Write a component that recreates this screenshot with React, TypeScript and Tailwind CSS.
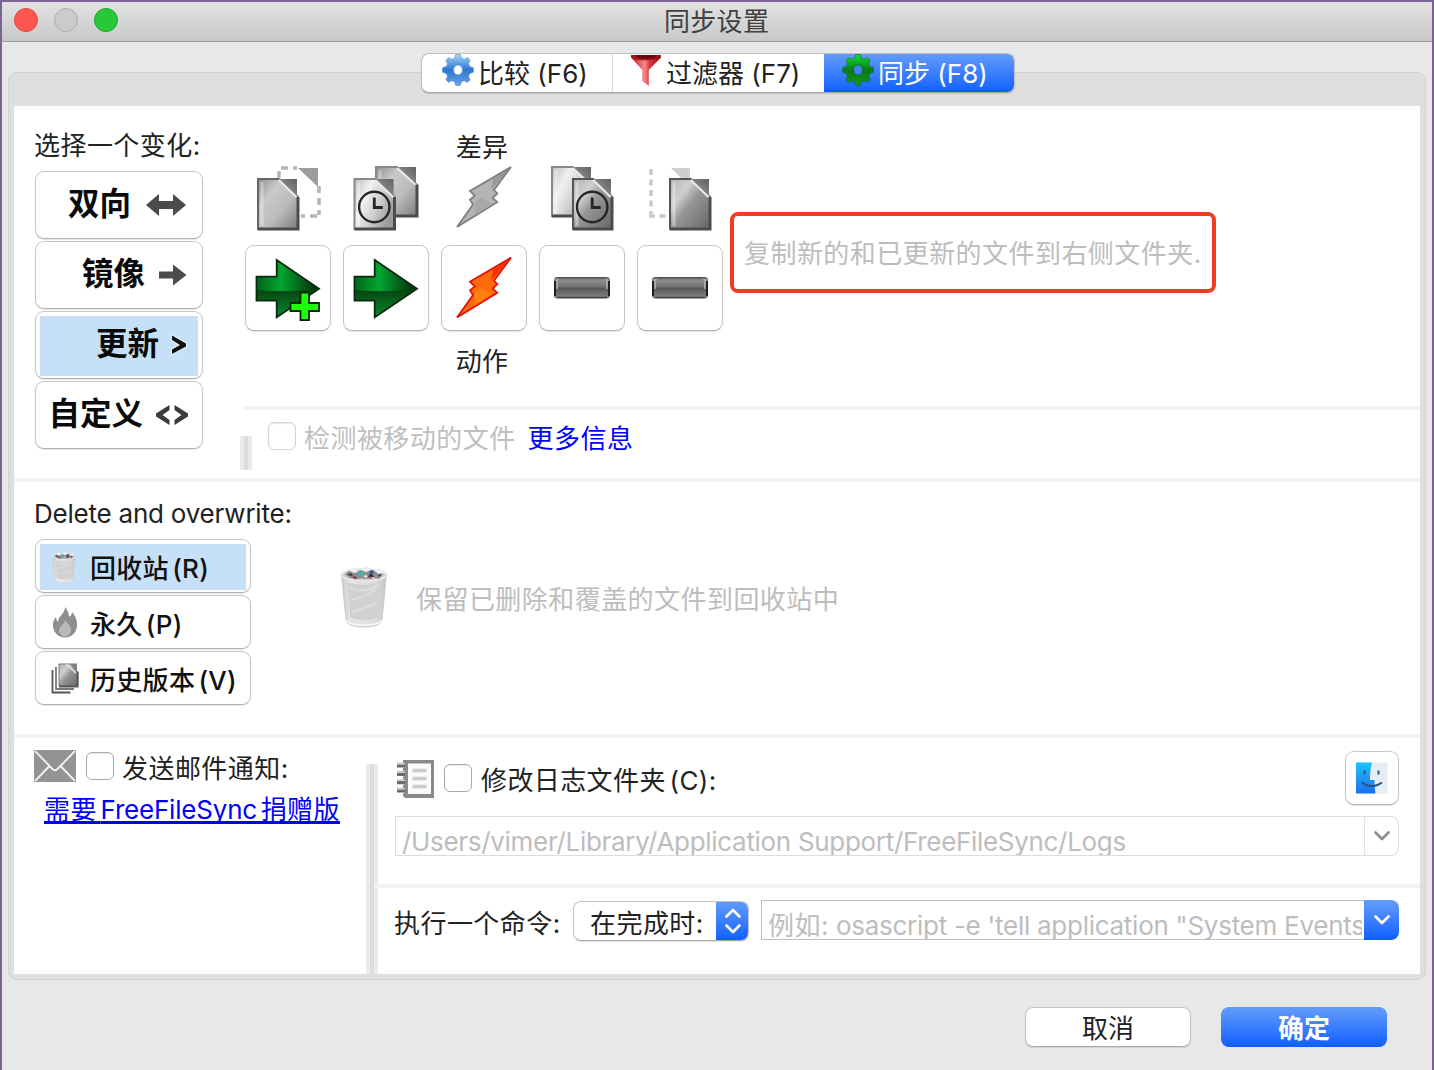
import React from "react";

const Label = ({ children, className = "tracking-[0.45px]" }: { children: React.ReactNode; className?: string }) => (
  <span className={`-mb-[2px] block whitespace-nowrap text-[26px] leading-[34px] ${className}`}>{children}</span>
);

const Gear = ({ id, top, mid, low, stroke, hole }: { id: string; top: string; mid: string; low: string; stroke: string; hole: string }) => (
  <svg width="32" height="32" viewBox="0 0 32 32" className="shrink-0">
    <defs>
      <linearGradient id={id} x1="0" y1="0" x2="0" y2="1">
        <stop offset="0" stopColor={top} />
        <stop offset="0.5" stopColor={mid} />
        <stop offset="1" stopColor={low} />
      </linearGradient>
    </defs>
    <g fill={`url(#${id})`} stroke={stroke} strokeWidth="0.6">
      <path d="M13.8 0.5h4.400l1.300 3.800 2.800 1 3.200-1.800 2.600 2.800-1.600 3.500 1.300 2.700 3.700 1.300v4.400l-3.700 1.300-1.300 2.700 1.600 3.500-2.600 2.800-3.200-1.800-2.800 1-1.300 3.800h-4.400l-1.300-3.800-2.800-1-3.200 1.800-2.600-2.800 1.600-3.500-1.300-2.700-3.700-1.300v-4.400l3.700-1.300 1.300-2.700-1.600-3.500 2.600-2.800 3.200 1.800 2.800-1z" />
    </g>
    <ellipse cx="16" cy="16" rx="4.6" ry="5" fill={hole} stroke={stroke} strokeOpacity="0.6" strokeWidth="1.6" />
  </svg>
);

const Funnel = () => (
  <svg width="32" height="32" viewBox="0 0 32 32" className="shrink-0">
    <defs>
      <linearGradient id="funnel" x1="0" x2="1">
        <stop offset="0" stopColor="#c4101a" />
        <stop offset="0.45" stopColor="#f58a8c" />
        <stop offset="0.62" stopColor="#d93a40" />
        <stop offset="1" stopColor="#a8060e" />
      </linearGradient>
    </defs>
    <path d="M1 3.5L12.3 16v11l6.5 5V16L31 3.5z" fill="url(#funnel)" />
    <path d="M1 1h30v2.5c-4 3.8-26 3.8-30 0z" fill="#a01419" />
    <path d="M6 1h20v2c-5 2-15 2-20 0z" fill="#6a0609" />
  </svg>
);

const paper = (x: number, y: number, w: number, h: number, fill: string, edge: string) => (
  <g>
    <path d={`M${x} ${y}h${w * 0.52}L${x + w} ${y + h * 0.36}V${y + h}H${x}z`} fill={fill} stroke={edge} strokeWidth="2" />
    <path d={`M${x + w * 0.52} ${y}H${x + w - 1}V${y + h * 0.36}z`} fill="url(#fold)" />
    <path d={`M${x + w * 0.52} ${y + 1}L${x + w - 1} ${y + h * 0.37}`} stroke="#ececec" strokeWidth="2" />
    <path d={`M${x + 4} ${y + 3}V${y + h - 3}`} stroke="#fff" strokeOpacity="0.35" strokeWidth="3" />
    <path d={`M${x + w} ${y + h * 0.36}V${y + h}H${x}`} fill="none" stroke="#4c4c4c" strokeWidth="3" />
  </g>
);

const Clock = ({ x }: { x: number }) => (
  <g fill="none" stroke="#262626">
    <circle cx={x} cy="41" r="15.2" strokeWidth="2.4" />
    <path d={`M${x} 31.5v10h8.5`} strokeWidth="2.8" />
  </g>
);

const Art = ({ children }: { children: React.ReactNode }) => (
  <svg width="66" height="66" viewBox="0 0 66 66" className="shrink-0">{children}</svg>
);

const SharedPaints = () => (
  <svg width="0" height="0" className="absolute">
    <defs>
      <linearGradient id="page" x1="0" y1="0" x2="1" y2="1">
        <stop offset="0" stopColor="#8d8d8d" />
        <stop offset="0.3" stopColor="#c9c9c9" />
        <stop offset="0.6" stopColor="#bcbcbc" />
        <stop offset="1" stopColor="#7b7b7b" />
      </linearGradient>
      <linearGradient id="pageLight" x1="0" y1="0" x2="1" y2="0.6">
        <stop offset="0" stopColor="#bdbdbd" />
        <stop offset="0.35" stopColor="#f1f1f1" />
        <stop offset="0.65" stopColor="#d0d0d0" />
        <stop offset="1" stopColor="#999" />
      </linearGradient>
      <linearGradient id="pageDark" x1="0" y1="0" x2="1" y2="1">
        <stop offset="0" stopColor="#b5b5b5" />
        <stop offset="0.3" stopColor="#cfcfcf" />
        <stop offset="0.5" stopColor="#969696" />
        <stop offset="1" stopColor="#666" />
      </linearGradient>
      <linearGradient id="fold" x1="0" y1="1" x2="1" y2="0">
        <stop offset="0" stopColor="#a5a5a5" />
        <stop offset="1" stopColor="#606060" />
      </linearGradient>
      <linearGradient id="greenTop" x1="0" y1="0" x2="1" y2="0">
        <stop offset="0" stopColor="#00661b" />
        <stop offset="0.4" stopColor="#03a52f" />
        <stop offset="1" stopColor="#04240b" />
      </linearGradient>
      <linearGradient id="greenLow" x1="0" y1="0" x2="0" y2="1">
        <stop offset="0" stopColor="#06400f" />
        <stop offset="1" stopColor="#0a8c2b" />
      </linearGradient>
      <linearGradient id="barFill" x1="0" y1="0" x2="0" y2="1">
        <stop offset="0" stopColor="#6a6a6a" />
        <stop offset="0.15" stopColor="#8c8c8c" />
        <stop offset="0.45" stopColor="#747474" />
        <stop offset="0.52" stopColor="#555" />
        <stop offset="1" stopColor="#888" />
      </linearGradient>
      <linearGradient id="can" x1="0" x2="1">
        <stop offset="0" stopColor="#c9c9c9" />
        <stop offset="0.2" stopColor="#e6e6e6" />
        <stop offset="0.75" stopColor="#dcdcdc" />
        <stop offset="1" stopColor="#c4c4c4" />
      </linearGradient>
    </defs>
  </svg>
);

const Bolt = ({ hot }: { hot?: boolean }) => (
  <Art>
    <g transform={hot ? "translate(0 1.6)" : undefined}>
      <path
        d="M6 61L22 38.5L19 33.8L23.7 29.8L19 25L60 1L43 24L46.3 27.5L41.7 32L46.3 36.2z"
        fill={hot ? "#ff6a0a" : "#b4b4b4"}
        stroke={hot ? "#e6140a" : "#808080"}
        strokeWidth="1.8"
      />
      <path d="M24 36L30 32L41 37L24 49z" fill={hot ? "#ff8a10" : "#a2a2a2"} fillOpacity="0.7" />
      <path d="M59 2L40 24L42 13z" fill={hot ? "#ef1a0a" : "#8c8c8c"} fillOpacity="0.7" />
    </g>
  </Art>
);

const arrowShape = "M1.500 21.7H21.7V5L64 33.7L21.7 62.3V45.7H1.500z";
const GreenArrow = ({ plus }: { plus?: boolean }) => (
  <Art>
    <path d={arrowShape} fill="url(#greenTop)" />
    <path d="M2 35Q30 38 63 33.7L21.7 62.3V45.7H2z" fill="url(#greenLow)" />
    <path d={arrowShape} fill="none" stroke="#0a2a10" strokeWidth="1.8" />
    {plus && <path d="M45.500 37.500h8.500v10.500h10v8h-10v9h-8.500v-9h-10v-8h10z" fill="#1dff0a" stroke="#052a05" strokeWidth="1.8" />}
  </Art>
);

const GrayBar = () => (
  <Art>
    <rect x="5" y="22" width="56" height="21.5" rx="3" fill="url(#barFill)" />
    <path d="M8 25q0-1 2-1M58 25q0-1-2-1M8 25v9M58 25v9" stroke="#b0b0b0" strokeWidth="1.6" fill="none" />
    <path d="M6 26v15M60 26v15" stroke="#1f1f1f" strokeWidth="2" />
    <path d="M8 42.500h50" stroke="#444" strokeWidth="1.600" />
    <path d="M8 22.800h50" stroke="#555" strokeWidth="1.600" />
  </Art>
);

const categories = [
  <Art key="a">
    <path d="M24 12V2H42M64 20v29M62 50H46" fill="none" stroke="#b5b5b5" strokeWidth="3.5" strokeDasharray="7 5" />
    <path d="M43 2H63V21z" fill="#9c9c9c" />
    {paper(3, 13, 40, 50, "url(#page)", "#666")}
  </Art>,
  <Art key="b">
    {paper(23, 1, 41, 49, "url(#page)", "#888")}
    {paper(1.5, 13, 40, 50, "url(#pageLight)", "#888")}
    <Clock x={21.3} />
  </Art>,
  <Bolt key="c" />,
  <Art key="d">
    {paper(3, 1, 40, 49, "url(#pageLight)", "#888")}
    {paper(24, 13, 39, 50, "url(#pageDark)", "#555")}
    <Clock x={43.2} />
  </Art>,
  <Art key="e">
    <path d="M4 3V48M2 50H21" fill="none" stroke="#c9c9c9" strokeWidth="3.5" strokeDasharray="6 4.5" />
    <path d="M24 2H43V12H34z" fill="#cfcfcf" />
    {paper(23, 13, 40, 50, "url(#pageDark)", "#555")}
  </Art>,
];

const actions = [<GreenArrow key="a" plus />, <GreenArrow key="b" />, <Bolt key="c" hot />, <GrayBar key="d" />, <GrayBar key="e" />];

const TrashCan = ({ w, h }: { w: number; h: number }) => (
  <svg width={w} height={h} viewBox="0 0 48 62" className="shrink-0">
    <path d="M1.500 8L6 54q1 7 18 7t18-7L46.500 8z" fill="url(#can)" stroke="#cdcdcd" strokeWidth="1" />
    <path d="M7 16L10.500 52q13 4 27 0L41 16q-15 6-34 0z" fill="#d2d1d1" />
    <path d="M9 21q14 8 30-3M11 34q12-2 26-12M12 46q12-3 24-9" stroke="#dedcdc" strokeWidth="2" fill="none" />
    <path d="M6 54q3 5 18 5t18-5" stroke="#f3f3f3" strokeWidth="2" fill="none" />
    <ellipse cx="24" cy="9" rx="22" ry="6" fill="#c9c9c9" stroke="#e6e6e6" strokeWidth="2" />
    <path d="M5 8l5-4 6 3 4-3 6 2 7-2 4 3 6 1-4 5-7-2-5 2-5-1-5 1-7-1z" fill="#8d8c8e" />
    <path d="M7 9l4-2 2 3zM28 11l3-5 3 5zM38 9l3-1-1 3zM13 12l2-2 2 3z" fill="#3a3337" />
    <path d="M17 8l4-3 3 3-4 2z" fill="#37b7b0" />
    <path d="M29 5l4-1 1 3-3 1z" fill="#3b569c" />
    <path d="M8 4l6-3 4 4-4 2zM21 3l6-3 3 4-4 2zM35 5l5-3 3 4-4 2zM23 10l4-1v3z" fill="#efefef" />
    <path d="M11 11l3-1 1 3zM28 12l3-2 1 3z" fill="#a8503c" />
  </svg>
);

const Flame = () => (
  <svg width="26" height="32" viewBox="0 0 26 32" className="shrink-0">
    <path d="M13 1c3 4 4 7 4 10 2-1 3-3 3-5 4 5 5.500 9 5 14-.5 7-6 11.500-12 11.500S1.500 27 1 20c-.2-4 1-7 3-9 0 2 1 4 2 5 0-6 7-8 7-15z" fill="#8f8f8f" />
    <path d="M13 14c3 4 6 6 6 10 0 4-3 6.500-6 6.500S7 28 7 24c0-3 5-5 6-10z" fill="#b9b9b9" />
  </svg>
);

const Versions = () => (
  <svg width="28" height="31" viewBox="0 0 28 31" className="shrink-0">
    <path d="M1.500 7v22.500h18" fill="none" stroke="#555" strokeWidth="1.800" />
    <path d="M5 4v22h18" fill="none" stroke="#777" strokeWidth="1.800" />
    <path d="M8 1h12l7 8v14H8z" fill="url(#pageDark)" stroke="#777" strokeWidth="1" />
    <path d="M19 .500h7V9z" fill="#808080" />
    <path d="M15 1l10 9" stroke="#e5e5e5" strokeWidth="1.500" />
    <path d="M26.500 9v14.500H8" fill="none" stroke="#555" strokeWidth="1.800" />
  </svg>
);

const Envelope = () => (
  <svg width="42" height="32" viewBox="0 0 42 32" className="shrink-0">
    <rect width="42" height="32" fill="#939393" />
    <path d="M1 1l17.500 18q2.500 2.500 5 0L41 1M1 31l14.500-15M41 31L26.500 16" fill="none" stroke="#f0f0f0" strokeWidth="1.900" />
  </svg>
);

const Notebook = () => (
  <svg width="38" height="38" viewBox="0 0 38 38" className="shrink-0">
    <path d="M7 0h31v38H7z" fill="#8a8a8a" />
    <path d="M12 3.500h23v30.500H12z" fill="#fafafa" />
    <path d="M5 3v35" stroke="#fff" strokeWidth="7" strokeDasharray="5 3.400" />
    <path d="M1 6h8M1 14.300h8M1 22.600h8M1 31h8" stroke="#6b6b6b" strokeWidth="3.200" />
    <path d="M1 3.500h8M1 11.800h8M1 20h8M1 28.400h8" stroke="#c4c4c4" strokeWidth="1.500" />
    <path d="M16.500 10.500h14M16.500 18.500h14M16.500 26.500h14" stroke="#cbcbcb" strokeWidth="3.600" />
  </svg>
);

const Finder = () => (
  <svg width="34" height="34" viewBox="0 0 34 34" className="shrink-0">
    <defs>
      <linearGradient id="face" x1="0" y1="0" x2="0" y2="1">
        <stop offset="0" stopColor="#1bc4fb" />
        <stop offset="1" stopColor="#1f6df0" />
      </linearGradient>
    </defs>
    <rect x="1.500" y="1.500" width="31" height="31" fill="#e6edf6" />
    <path d="M1 1.500h16c-1.500 6-2 11-2 17.500h4.500c0 5 .3 9 1 13.500H1z" fill="url(#face)" />
    <path d="M9.500 9.500v4M23.500 9.500v4" stroke="#2b567f" strokeWidth="2" />
    <path d="M7 21.500q9.500 7.500 20 0" fill="none" stroke="#2b567f" strokeWidth="1.900" />
  </svg>
);

const Check = ({ dim }: { dim?: boolean }) => (
  <span className={`block size-7 shrink-0 rounded-[6px] border bg-white shadow-[inset_0_1px_1px_rgba(0,0,0,0.08)] ${dim ? "border-[#d4d4d4]" : "border-[#a9a9a9]"}`} />
);

const card = "rounded-[9px] border border-[#c6c6c6] border-b-[#b2b2b2] bg-white shadow-[0_1px_1px_rgba(0,0,0,0.1)]";
const blue = "bg-linear-to-b from-[#639cfb] to-[#0a5dff]";

const modes = [
  { name: "双向", gap: "gap-[14px] pr-[11px]", icon: <svg width="42" height="24" viewBox="0 0 42 24"><path d="M1 12L14 1v7h14V1l13 11-13 11v-7H14v7z" fill="#4b4b4b" /></svg> },
  { name: "镜像", gap: "gap-[13px] pr-[11px]", icon: <svg width="29" height="24" viewBox="0 0 29 24"><path d="M1 8.500h14V1.500L28.500 12 15 22.500v-7H1z" fill="#4b4b4b" /></svg> },
  { name: "更新", gap: "gap-[11px] pr-[10px]", icon: <svg width="18" height="26" viewBox="0 0 18 26"><path d="M2 3.500L16 11.500v3L2 22v-4.500l8-4.600L2 8z" fill="#fff" stroke="#fff" strokeOpacity="0.500" strokeWidth="2.500" /><path d="M2 3.500L16 11.500v3L2 22v-4.500l8-4.600L2 8z" fill="#111" /></svg> },
  { name: "自定义", gap: "gap-[12px] pr-[9px]", icon: <svg width="34" height="24" viewBox="0 0 34 24"><path d="M14.500 2L1 10.500v3L14.500 22v-5l-7-5 7-5zM19.500 2L33 10.500v3L19.500 22v-5l7-5-7-5z" fill="#3c3c3c" /></svg> },
];

const Chevron = ({ color }: { color: string }) => (
  <svg width="16" height="10" viewBox="0 0 16 10"><path d="M1.500 1.500L8 8l6.500-6.500" fill="none" stroke={color} strokeWidth="2.600" strokeLinecap="round" strokeLinejoin="round" /></svg>
);

export default function App() {
  return (
    <div className="flex h-[1070px] w-[1434px] flex-col overflow-hidden border-x-2 border-t-2 border-[#7b6397] bg-[#e8e8e8] font-['Inter','Noto_Sans_CJK_SC',sans-serif] text-[#222]">
      <SharedPaints />
      <header className="flex h-10 shrink-0 items-start border-b border-[#9e9e9e] bg-linear-to-b from-[#e2e2e2] to-[#c9c9c9] pl-3 pt-[6px]">
        <div className="flex w-[650px] gap-4">
          <span className="size-6 rounded-full border border-[#e2463f] bg-[#ff574f]" />
          <span className="size-6 rounded-full border border-[#adadad] bg-[#cbcbcb]" />
          <span className="size-6 rounded-full border border-[#12ac28] bg-[#27c83a]" />
        </div>
        <Label className="-mt-[3px] tracking-[0.3px] text-[#404040]">同步设置</Label>
      </header>

      <main className="mx-[6px] mt-[30px] h-[908px] shrink-0 rounded-[9px] border border-[#d2d2d2] bg-[#dfdfdf] px-[5px]">
        <nav className="-mt-5 flex h-[53px] justify-center pl-[2px]">
          <div className="flex h-10 w-[594px] overflow-hidden rounded-[8px] border border-[#c0c0c0] border-b-[#a6a6a6] bg-white shadow-[0_1px_1px_rgba(0,0,0,0.12)]">
            <div className="flex w-[191px] border-r border-[#dadada] pl-5">
              <Gear id="gearBlue" top="#a9d4fb" mid="#2d76cf" low="#6aa5e8" stroke="#4a8de0" hole="#fff" />
              <Label className="ml-1 mt-[3px]">比较 (F6)</Label>
            </div>
            <div className="flex w-[211px] pl-[17px]">
              <Funnel />
              <Label className="ml-1 mt-[3px]">过滤器 (F7)</Label>
            </div>
            <div className={`-my-px -mr-px flex flex-1 pl-[18px] pt-px text-white ${blue}`}>
              <Gear id="gearGreen" top="#15e02c" mid="#087c1a" low="#12961f" stroke="#0a6a20" hole="#3f83f7" />
              <Label className="ml-1 mt-[3px]">同步 (F8)</Label>
            </div>
          </div>
        </nav>

        <div className="flex h-[868px] flex-col bg-white">
          <section className="flex h-[372px]">
            <div className="w-[226px] pl-[21px] pt-[23px]">
              <Label className="-ml-px tracking-[0.45px]">选择一个变化:</Label>
              <div className="mt-[10px] flex flex-col gap-[2px]">
                {modes.map((m) => (
                  <div key={m.name} className={`h-[68px] w-[168px] p-1 ${card}`}>
                    <div className={`flex h-[60px] items-center justify-end ${m.gap} ${m.name === "更新" ? "bg-[#c6e0f7]" : ""}`}>
                      <span className="-mt-[5px] whitespace-nowrap text-[31.5px] font-bold leading-[40px] text-[#0a0a0a]">{m.name}</span>
                      <span className="-mt-[2px]">{m.icon}</span>
                    </div>
                  </div>
                ))}
              </div>
            </div>

            <div className="flex flex-1 flex-col">
              <div className="ml-1 flex h-[300px]">
                <div className="ml-px flex w-[478px] flex-col items-start">
                  <Label className="mt-[25px] w-[474px] text-center tracking-[0.3px]">差异</Label>
                  <div className="mt-[3px] flex gap-8 pl-[10px]">{categories}</div>
                  <div className="mt-[13px] flex gap-3">
                    {actions.map((a, i) => (
                      <div key={i} className={`flex size-[86px] items-center justify-center ${card}`}>{a}</div>
                    ))}
                  </div>
                  <Label className="mt-[14px] w-[474px] text-center tracking-[0.3px]">动作</Label>
                </div>
                <div className="ml-[7px] mt-[106px] flex h-[81px] w-[486px] items-center rounded-[8px] border-4 border-[#ef3e23] pl-[10px] text-[#bdbdbd]">
                  <Label>复制新的和已更新的文件到右侧文件夹.</Label>
                </div>
              </div>
              <div className="ml-1 h-1 bg-[#f4f4f4]" />
              <div className="flex h-[68px]">
                <div className="mt-[26px] h-[34px] w-3 bg-[#ebebeb] px-1">
                  <div className="h-full rounded-full border border-[#d8d8d8] bg-[#dfdfdf]" />
                </div>
                <div className="ml-4 mt-3"><Check dim /></div>
                <Label className="ml-2 mt-3 tracking-[0.45px] text-[#bfbfbf]">检测被移动的文件</Label>
                <Label className="ml-3 mt-3 tracking-[0.45px] text-[#0000ff]">更多信息</Label>
              </div>
            </div>
          </section>

          <div className="h-1 bg-[#f4f4f4]" />

          <section className="flex h-[252px]">
            <div className="w-[326px] pl-[21px] pt-[15px]">
              <Label className="-ml-px tracking-[-0.22px]">Delete and overwrite:</Label>
              <div className="mt-[10px] flex flex-col gap-[2px]">
                <div className={`h-[54px] w-[216px] p-1 ${card}`}>
                  <div className="flex h-[46px] items-center bg-[#c6e0f7] pl-3">
                    <TrashCan w={24} h={31} />
                    <Label className="ml-[14px] mt-[2px] font-medium tracking-[0.3px] text-[#111] [word-spacing:-4px]">回收站 (R)</Label>
                  </div>
                </div>
                <div className={`flex h-[54px] w-[216px] items-center pl-4 ${card}`}>
                  <Flame />
                  <Label className="ml-3 mt-[3px] font-medium tracking-[0.3px] text-[#111] [word-spacing:-4px]">永久 (P)</Label>
                </div>
                <div className={`flex h-[54px] w-[216px] items-center pl-[15px] ${card}`}>
                  <Versions />
                  <Label className="ml-[11px] mt-[3px] font-medium tracking-[0.3px] text-[#111] [word-spacing:-4px]">历史版本 (V)</Label>
                </div>
              </div>
            </div>
            <div className="mt-[84px] h-[62px]"><TrashCan w={48} h={62} /></div>
            <Label className="ml-7 mt-[101px] tracking-[0.45px] text-[#bdbdbd]">保留已删除和覆盖的文件到回收站中</Label>
          </section>

          <div className="h-1 bg-[#f4f4f4]" />

          <section className="flex h-[236px]">
            <div className="w-[352px] pl-5 pt-3">
              <div className="flex">
                <Envelope />
                <div className="ml-[10px] mt-[2px]"><Check /></div>
                <Label className="ml-2 mt-[2px] tracking-[0.45px]">发送邮件通知:</Label>
              </div>
              <Label className="ml-[10px] mt-[9px] w-[295px] tracking-[0.4px] text-[#0000ff] underline decoration-[3px] underline-offset-[2px] [text-decoration-skip-ink:none] [word-spacing:-4px]">
                需要 <span className="tracking-[-0.2px]">FreeFileSync</span> 捐赠版
              </Label>
            </div>
            <div className="mt-[26px] w-3 bg-[#ebebeb] px-1">
              <div className="h-full rounded-full border border-[#d8d8d8] bg-[#dfdfdf]" />
            </div>
            <div className="flex flex-1 flex-col">
              <div className="flex h-[78px] pl-[18px] pr-[21px]">
                <div className="mt-[22px]"><Notebook /></div>
                <div className="ml-[10px] mt-[26px]"><Check /></div>
                <Label className="ml-[9px] mt-[26px] flex-1 tracking-[0.4px] [word-spacing:-4px]">修改日志文件夹 (C):</Label>
                <div className={`mt-[13px] flex size-[54px] items-center justify-center ${card}`}><Finder /></div>
              </div>
              <div className="ml-[17px] mr-[21px] flex h-10 w-[1004px] overflow-hidden rounded-r-[8px] border border-[#dcdcdc] text-[#bdbdbd]">
                <Label className="mt-2 flex-1 pl-[6px] tracking-[-0.31px]">/Users/vimer/Library/Application Support/FreeFileSync/Logs</Label>
                <div className="flex w-[34px] items-center justify-center border-l border-[#e4e4e4]"><Chevron color="#8e8e8e" /></div>
              </div>
              <div className="-ml-1 mt-[28px] h-1 bg-[#f2f2f2]" />
              <div className="flex pl-4 pt-3">
                <Label className="mt-[7px] w-[179px] tracking-[0.45px]">执行一个命令:</Label>
                <div className="mt-px flex h-10 w-[176px] overflow-hidden rounded-[8px] border border-[#c4c4c4] border-b-[#a8a8a8] shadow-[0_1px_1px_rgba(0,0,0,0.1)]">
                  <Label className="mt-[5px] flex-1 pl-4 tracking-[0.45px]">在完成时:</Label>
                  <div className={`-my-px -mr-px flex w-[33px] flex-col items-center justify-center gap-[6px] ${blue}`}>
                    <svg width="16" height="10" viewBox="0 0 16 10"><path d="M1.500 8.500L8 2l6.500 6.500" fill="none" stroke="#fff" strokeWidth="2.600" strokeLinecap="round" strokeLinejoin="round" /></svg>
                    <Chevron color="#fff" />
                  </div>
                </div>
                <div className="ml-3 flex h-10 w-[638px] text-[#bdbdbd]">
                  <div className="w-[603px] overflow-hidden border border-r-0 border-[#bebebe] pl-[6px] pr-[2px]">
                    <div className="h-[38px] overflow-hidden pt-2"><Label className="tracking-[-0.27px]"><span className="tracking-[0.45px]">例如:</span> osascript -e 'tell application "System Events"</Label></div>
                  </div>
                  <div className={`flex w-[35px] items-center justify-center rounded-r-[8px] ${blue}`}><Chevron color="#fff" /></div>
                </div>
              </div>
            </div>
          </section>
        </div>
      </main>

      <footer className="mt-[27px] flex justify-end gap-[30px] pr-[45px]">
        <button className="h-10 w-[166px] rounded-[8px] border border-[#c4c4c4] border-b-[#a8a8a8] bg-white shadow-[0_1px_1px_rgba(0,0,0,0.1)]">
          <Label className="mt-[2px]">取消</Label>
        </button>
        <button className={`h-10 w-[166px] rounded-[8px] text-white ${blue}`}>
          <Label className="mt-[2px] font-bold">确定</Label>
        </button>
      </footer>
    </div>
  );
}
